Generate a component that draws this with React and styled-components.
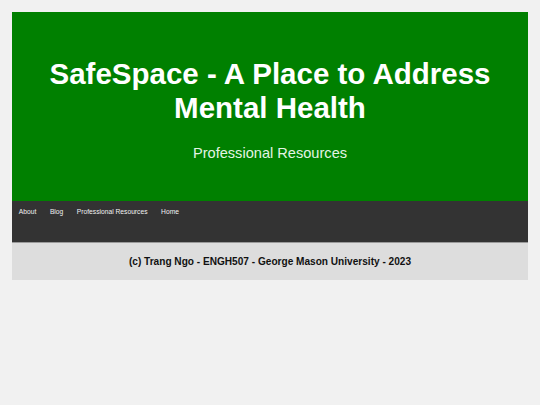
import styled, { createGlobalStyle } from "styled-components";

const Global = createGlobalStyle`
  body {
    margin: 0;
    background: #f1f1f1;
    font-family: "Liberation Sans", Arial, sans-serif;
  }
`;

const Page = styled.div`
  padding: 12px;
`;

const Header = styled.header`
  height: 189px;
  background: #008000;
  color: white;
  text-align: center;
  display: flex;
  flex-direction: column;
  align-items: center;
  padding-top: 45px;
  box-sizing: border-box;
`;

const Title = styled.h1`
  margin: 0;
  font-size: 29.5px;
  line-height: 34px;
  font-weight: bold;
  width: 470px;
`;

const Subtitle = styled.p`
  margin: 19px 0 0;
  font-size: 14.6px;
  line-height: 18px;
  color: #e4f4e4;
`;

const Nav = styled.nav`
  height: 42px;
  background: #333333;
  display: flex;
  align-items: flex-start;
  padding: 5px 0 0 0px;
  box-sizing: border-box;
  border-bottom: 1px solid #9a9a9a;
`;

const NavLink = styled.a`
  color: #f2f2f2;
  font-size: 6.7px;
  line-height: 9px;
  padding: 1px 6.8px;
  text-decoration: none;
`;

const Footer = styled.footer`
  height: 37px;
  background: #dddddd;
  display: flex;
  align-items: center;
  justify-content: center;
  font-weight: bold;
  font-size: 10.1px;
  color: #111;
`;

export default function App() {
  return (
    <>
      <Global />
      <Page>
        <Header>
          <Title>SafeSpace - A Place to Address Mental Health</Title>
          <Subtitle>Professional Resources</Subtitle>
        </Header>
        <Nav>
          {["About", "Blog", "Professional Resources", "Home"].map((l) => (
            <NavLink key={l} href="#">
              {l}
            </NavLink>
          ))}
        </Nav>
        <Footer>(c) Trang Ngo - ENGH507 - George Mason University - 2023</Footer>
      </Page>
    </>
  );
}
